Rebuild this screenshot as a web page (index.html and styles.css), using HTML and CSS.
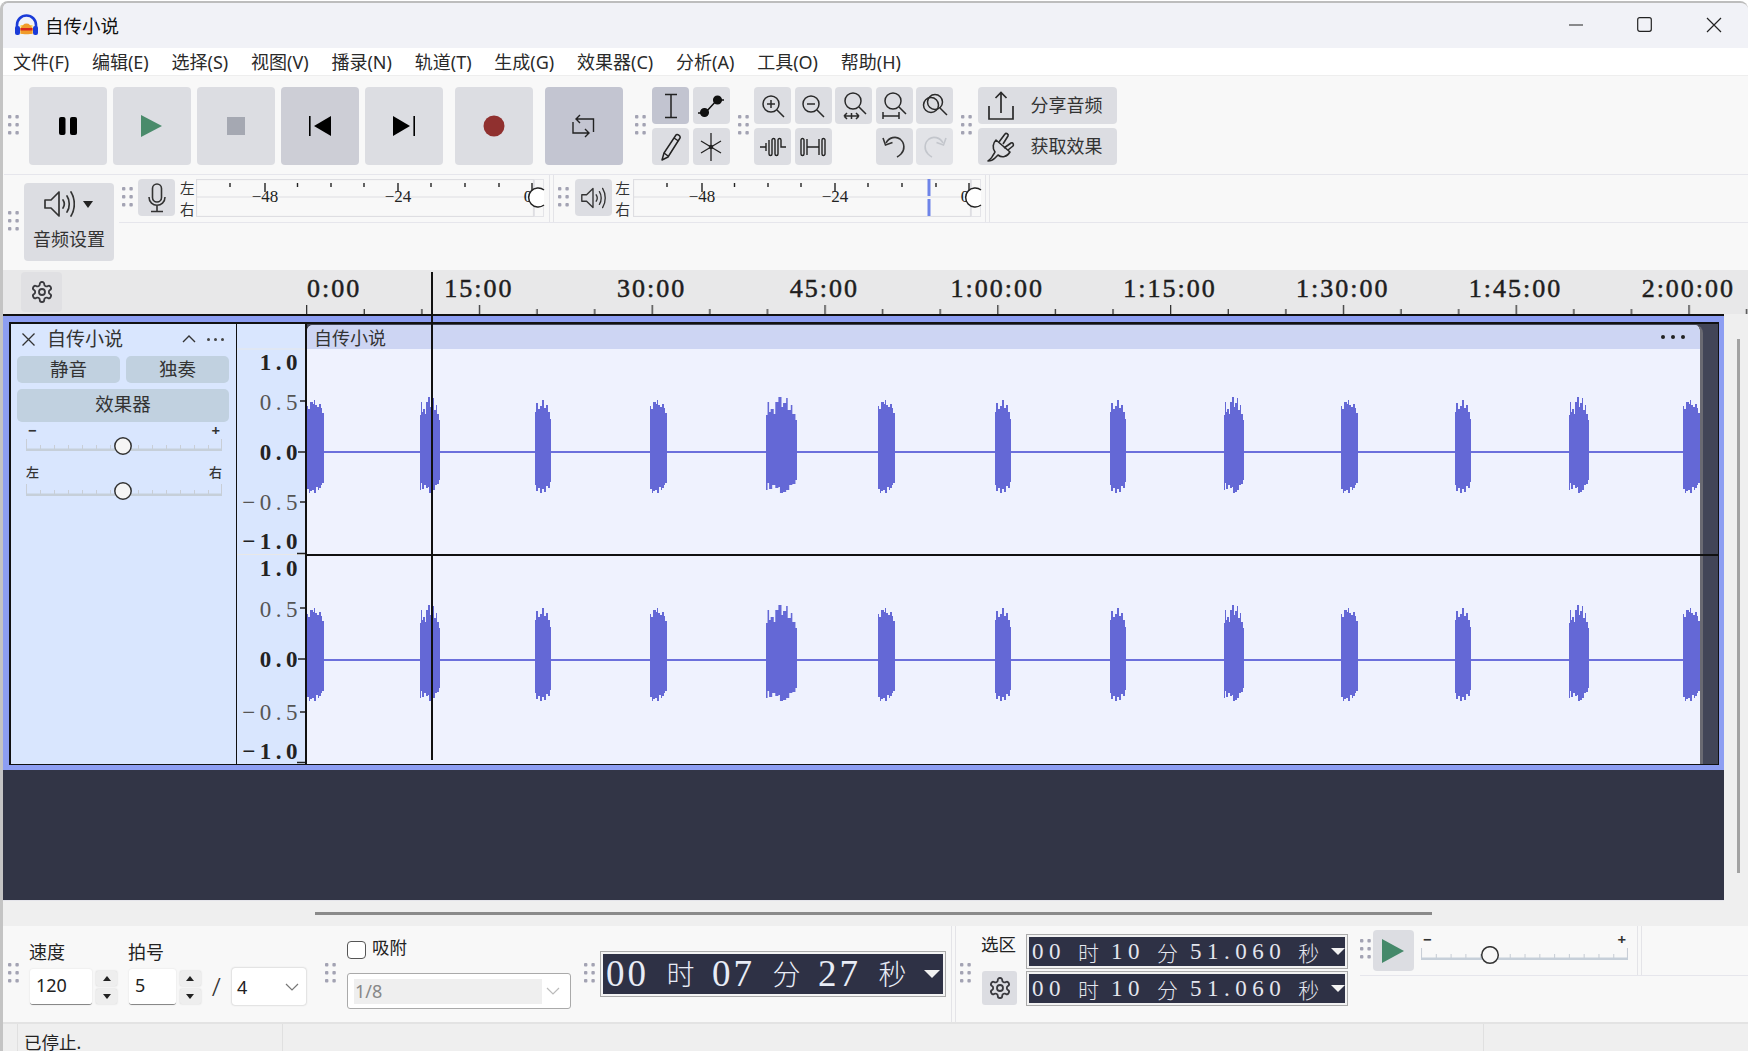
FILE: index.html
```html
<!DOCTYPE html>
<html lang="zh-CN">
<head>
<meta charset="utf-8">
<title>自传小说</title>
<link rel="stylesheet" href="styles.css">
</head>
<body>
<svg class="defs" width="0" height="0" aria-hidden="true">
  <defs>
    <symbol id="grip" viewBox="0 0 11 20"><g fill="#a3a3b3"><rect x="0" y="0" width="3.4" height="3.4" rx="1"/><rect x="7.4" y="0" width="3.4" height="3.4" rx="1"/><rect x="0" y="8" width="3.4" height="3.4" rx="1"/><rect x="7.4" y="8" width="3.4" height="3.4" rx="1"/><rect x="0" y="16" width="3.4" height="3.4" rx="1"/><rect x="7.4" y="16" width="3.4" height="3.4" rx="1"/></g></symbol>
    <symbol id="gear" viewBox="0 0 24 24"><g fill="none" stroke="#3a3a3f" stroke-width="1.8"><path d="M12.22 2h-.44a2 2 0 0 0-2 2v.18a2 2 0 0 1-1 1.73l-.43.25a2 2 0 0 1-2 0l-.15-.08a2 2 0 0 0-2.73.73l-.22.38a2 2 0 0 0 .73 2.73l.15.1a2 2 0 0 1 1 1.72v.51a2 2 0 0 1-1 1.74l-.15.09a2 2 0 0 0-.73 2.73l.22.38a2 2 0 0 0 2.73.73l.15-.08a2 2 0 0 1 2 0l.43.25a2 2 0 0 1 1 1.73V20a2 2 0 0 0 2 2h.44a2 2 0 0 0 2-2v-.18a2 2 0 0 1 1-1.73l.43-.25a2 2 0 0 1 2 0l.15.08a2 2 0 0 0 2.73-.73l.22-.39a2 2 0 0 0-.73-2.73l-.15-.08a2 2 0 0 1-1-1.74v-.5a2 2 0 0 1 1-1.74l.15-.09a2 2 0 0 0 .73-2.73l-.22-.38a2 2 0 0 0-2.73-.73l-.15.08a2 2 0 0 1-2 0l-.43-.25a2 2 0 0 1-1-1.73V4a2 2 0 0 0-2-2z"/><circle cx="12" cy="12" r="3"/></g></symbol>
    <symbol id="speaker" viewBox="0 0 32 30"><g fill="none" stroke="#333" stroke-width="1.7" stroke-linejoin="round" stroke-linecap="round"><path d="M2 11h6l8-8v24l-8-8H2z"/><path d="M20 11c1.6 2.4 1.6 5.6 0 8"/><path d="M24 7c3 4.4 3 11.6 0 16"/><path d="M28 3c4.4 7 4.4 17 0 24"/></g></symbol>
    <symbol id="mtr" viewBox="0 0 350 38">
      <rect x="338.5" y=".5" width="9" height="37" fill="none" stroke="#e4e4e8"/>
      <rect x=".5" y=".5" width="337" height="37" fill="#f8f8f8" stroke="#dedee2" stroke-width="1.2"/>
      <path d="M.5 18h337" stroke="#dedee2" stroke-width="1.2"/>
      <path d="M34 4v4M101.500 4v4M135 4v4M168 4v4M235 4v4M269 4v4M303 4v4M69 4v9M202 4v9M336 4v9" stroke="#222" stroke-width="1.4" fill="none"/>
      <g class="mtr-text"><text x="69" y="22.500" text-anchor="middle">−48</text><text x="202" y="22.500" text-anchor="middle">−24</text><text x="332" y="22.500" text-anchor="middle">0</text></g>
      <path d="M348 11a9.500 9.500 0 1 0 0 15" fill="#fff" stroke="#222" stroke-width="1.500"/>
    </symbol>
    <symbol id="ticks" viewBox="0 0 196 12" preserveAspectRatio="none">
      <path d="M.5 0v10M14.500 6v4M28.500 6v4M42.500 6v4M56.500 6v4M70.500 6v4M84.500 6v4M98.500 6v4M112.500 6v4M126.500 6v4M140.500 6v4M154.500 6v4M168.500 6v4M182.500 6v4M195.500 0v10" stroke="#c9ced6" fill="none"/>
      <rect x="0" y="9.500" width="196" height="2.500" fill="#c6cfd9"/>
    </symbol>
    <path id="b1" d="M0-46H1V-43H3V-50H6V-48H7V-52H8V-47H10V-45H12V-48H14V-44H15V-39H17V31H15V33H14V36H12V38H11V35H9V41H7V38H5V39H3V41H2V37H0Z"/>
    <path id="b2" d="M0-37H1V-50H2V-40H3V-43H5V-38H6V-50H8V-55H10V-45H11V-49H13V-54H14V-42H16V-47H17V-38H19V-32H20V28H19V32H17V33H15V38H13V40H11V41H9V35H8V36H6V33H4V37H2V31H1V38H0Z"/>
    <path id="b3" d="M0-40H1V-49H3V-43H5V-46H7V-52H9V-44H11V-47H13V-40H15V-33H16V30H15V36H13V34H11V40H9V37H7V41H5V36H3V39H1V33H0Z"/>
    <g id="wave" fill="#6468d6">
      <rect x="0" y="-1" width="1396" height="2" fill="#6c70dc"/>
      <use href="#b1" x="0"/>
      <use href="#b2" x="113"/>
      <use href="#b3" x="228"/>
      <use href="#b1" x="343"/>
      <use href="#b2" transform="translate(459 0) scale(1.55 1)"/>
      <use href="#b1" x="571"/>
      <use href="#b3" x="688"/>
      <use href="#b3" x="803"/>
      <use href="#b2" x="917"/>
      <use href="#b1" x="1034"/>
      <use href="#b3" x="1148"/>
      <use href="#b2" x="1262"/>
      <use href="#b1" x="1376"/>
    </g>
  </defs>
</svg>

<div class="window">
  <header class="titlebar">
    <svg class="logo" width="25" height="22" viewBox="0 0 25 22">
      <path d="M6.500 11h12v9h-12z" fill="#f8d25a"/>
      <path d="M6.500 14.500c2-3 3-5 6-5s4 2 6 5v5c-2 1-10 1-12 0z" fill="#f09a2a"/>
      <path d="M6.500 14h12v2.500h-12z" fill="#d8261c"/>
      <path d="M3 15V11a9.500 9.500 0 0 1 19 0v4" fill="none" stroke="#1a3bd8" stroke-width="2.600"/>
      <rect x="1" y="12" width="5" height="9" rx="2" fill="#1a3bd8"/><rect x="19" y="12" width="5" height="9" rx="2" fill="#1a3bd8"/>
    </svg>
    <span class="title-text">自传小说</span>
    <div class="win-controls">
      <svg width="14" height="2" viewBox="0 0 14 2"><path d="M0 1h14" stroke="#222" stroke-width="1.200"/></svg>
      <svg width="15" height="15" viewBox="0 0 15 15"><rect x=".7" y=".7" width="13.600" height="13.600" rx="2" fill="none" stroke="#222" stroke-width="1.200"/></svg>
      <svg width="16" height="16" viewBox="0 0 16 16"><path d="M1 1l14 14M15 1L1 15" stroke="#222" stroke-width="1.200"/></svg>
    </div>
  </header>

  <nav class="menubar">
    <span>文件(F)</span><span>编辑(E)</span><span>选择(S)</span><span>视图(V)</span><span>播录(N)</span><span>轨道(T)</span><span>生成(G)</span><span>效果器(C)</span><span>分析(A)</span><span>工具(O)</span><span>帮助(H)</span>
  </nav>

  <section class="toolbars">
    <div class="tool-row">
      <svg class="grip grip-top"><use href="#grip"/></svg>
      <div class="transport">
        <div class="tbtn"><svg width="18" height="18" viewBox="0 0 18 18"><rect width="6.500" height="18" rx="2"/><rect x="11" width="7" height="18" rx="2"/></svg></div>
        <div class="tbtn"><svg width="21" height="22" viewBox="0 0 21 22"><path d="M0 0l21 11L0 22z" fill="#4a8b6b"/></svg></div>
        <div class="tbtn"><svg width="18" height="18" viewBox="0 0 18 18"><rect width="18" height="18" fill="#a5a8b2"/></svg></div>
        <div class="tbtn tbtn-dim"><svg width="22" height="20" viewBox="0 0 22 20"><rect width="1.600" height="20"/><path d="M22 0v20L5 10z"/></svg></div>
        <div class="tbtn"><svg width="22" height="20" viewBox="0 0 22 20"><rect x="20.400" width="1.600" height="20"/><path d="M0 0v20l17-10z"/></svg></div>
        <div class="tbtn tbtn-rec"><svg width="22" height="22" viewBox="0 0 22 22"><circle cx="11" cy="11" r="10.500" fill="#90302f"/></svg></div>
        <div class="tbtn tbtn-loop"><svg width="23" height="24" viewBox="0 0 23 24" fill="none" stroke="#222" stroke-width="1.400"><path d="M8 1L4 5l4 4M4 5h17.500v13"/><path d="M1 8v11h16M13 15l4 4-4 4"/></svg></div>
      </div>
      <svg class="grip grip-a"><use href="#grip"/></svg>
      <div class="tool-grid">
        <div class="sbtn sbtn-on"><svg width="16" height="26" viewBox="0 0 16 26" fill="none" stroke="#222" stroke-width="1.500"><path d="M2 1.500h12M2 24.500h12M8 1.500v23"/></svg></div>
        <div class="sbtn"><svg width="28" height="24" viewBox="0 0 28 24" fill="none" stroke="#111" stroke-width="1.500"><path d="M9 18L20 6M1 19h3M20 6h7"/><circle cx="7.500" cy="18.500" r="3.800" fill="#111"/><circle cx="20.500" cy="6" r="3.800" fill="#111"/></svg></div>
        <div class="sbtn"><svg width="25" height="29" viewBox="0 0 25 29" fill="none" stroke="#222" stroke-width="1.500" stroke-linejoin="round"><path d="M6 21L18 3c1-1.500 5 1 4 3L10 25l-6 3z"/><path d="M16 6l4.500 3M6 21l4 3"/></svg></div>
        <div class="sbtn"><svg width="24" height="28" viewBox="0 0 24 28" fill="none" stroke="#222" stroke-width="1.300"><path d="M12 0v28M2 8l20 12M22 8L2 20"/><circle cx="12" cy="14" r="1.600" fill="#222"/></svg></div>
      </div>
      <svg class="grip grip-b"><use href="#grip"/></svg>
      <div class="zoom-grid">
        <div class="sbtn"><svg width="24" height="24" viewBox="0 0 24 24" fill="none" stroke="#2a2a2a" stroke-width="1.500"><circle cx="10" cy="10" r="8"/><path d="M16 16l7 7M6 10h8M10 6v8"/></svg></div>
        <div class="sbtn"><svg width="24" height="24" viewBox="0 0 24 24" fill="none" stroke="#2a2a2a" stroke-width="1.500"><circle cx="10" cy="10" r="8"/><path d="M16 16l7 7M6 10h8"/></svg></div>
        <div class="sbtn"><svg width="26" height="28" viewBox="0 0 26 28" fill="none" stroke="#2a2a2a" stroke-width="1.500"><circle cx="12" cy="9" r="8"/><path d="M18 15l7 7M3 24h15M3 24l3-3M3 24l3 3M18 24l-3-3M18 24l-3 3M10.500 21v6"/></svg></div>
        <div class="sbtn"><svg width="26" height="28" viewBox="0 0 26 28" fill="none" stroke="#2a2a2a" stroke-width="1.500"><circle cx="12" cy="9" r="8"/><path d="M18 15l7 7M2 24h16M2 20v7M18 20v7"/></svg></div>
        <div class="sbtn"><svg width="26" height="26" viewBox="0 0 26 26" fill="none" stroke="#2a2a2a" stroke-width="1.500"><circle cx="9" cy="12" r="7.500"/><circle cx="13" cy="9" r="7.500"/><path d="M18 15l7 7"/></svg></div>
        <div class="sbtn"><svg width="26" height="20" viewBox="0 0 26 20" fill="none" stroke="#222" stroke-width="1.400"><path d="M0 10h6M6 6v8M9 3v14a1.500 1.500 0 0 0 3 0V3a1.500 1.500 0 0 1 3 0v14a1.500 1.500 0 0 0 3 0V3a1.500 1.500 0 0 1 3 0v7h5"/></svg></div>
        <div class="sbtn"><svg width="26" height="20" viewBox="0 0 26 20" fill="none" stroke="#222" stroke-width="1.400"><path d="M1 3v14a1.500 1.500 0 0 0 3 0V3a1.500 1.500 0 0 0-3 0zM7 2v16M7 10h12M19 2v16M22 3v14a1.500 1.500 0 0 0 3 0V3a1.500 1.500 0 0 0-3 0z"/></svg></div>
        <div class="sbtn-gap"></div>
        <div class="sbtn"><svg width="24" height="26" viewBox="0 0 24 26" fill="none" stroke="#333" stroke-width="1.600"><path d="M4 9c3-6 10-7 14-4 5 4 5 11 1 15-1 1-2 2-4 3"/><path d="M1 4l2.500 7 7-2.500"/></svg></div>
        <div class="sbtn sbtn-off"><svg width="24" height="26" viewBox="0 0 24 26" fill="none" stroke="#c3c6cc" stroke-width="1.600"><path d="M20 9c-3-6-10-7-14-4-5 4-5 11-1 15 1 1 2 2 4 3"/><path d="M23 4l-2.500 7-7-2.500"/></svg></div>
      </div>
      <svg class="grip grip-c"><use href="#grip"/></svg>
      <div class="share-col">
        <div class="wide-btn"><svg width="28" height="32" viewBox="0 0 28 32" fill="none" stroke="#2a2a2a" stroke-width="1.700"><path d="M2 16v13h24V16M14 23V3M8.500 8L14 2.500 19.500 8"/></svg><span>分享音频</span></div>
        <div class="wide-btn"><svg width="28" height="32" viewBox="0 0 28 32" fill="none" stroke="#2a2a2a" stroke-width="1.600" stroke-linejoin="round"><path d="M9 9l14 12c-3 5-8 6-12 3l-3 3c-2 2-4 3-7 3 1-1 3-2 4-4 1-2 2-3 3-5-3-4-2-9 1-12z"/><path d="M12 11l6-8c1-1.500 4 0 3 2l-5 8M17 17l7-5c2-1 3 1.500 2 3l-5 4"/></svg><span>获取效果</span></div>
      </div>
    </div>

    <div class="audio-row">
      <svg class="grip grip-audio"><use href="#grip"/></svg>
      <div class="audio-setup">
        <div class="audio-icons"><svg width="32" height="30"><use href="#speaker"/></svg><i class="caret-down"></i></div>
        <span>音频设置</span>
      </div>
      <div class="meter-area">
        <div class="meter-row">
          <svg class="grip grip-m1"><use href="#grip"/></svg>
          <div class="mbtn"><svg width="18" height="30" viewBox="0 0 18 30" fill="none" stroke="#333" stroke-width="1.600"><rect x="4.500" y="1" width="9" height="18" rx="4.500"/><path d="M1 14c0 11 16 11 16 0M9 22v6M3 28.500h12"/></svg></div>
          <div class="lr"><span>左</span><span>右</span></div>
          <svg class="meter" width="350" height="38"><use href="#mtr"/></svg>
          <div class="dbl-sep dbl-sep-a"></div>
          <svg class="grip grip-m2"><use href="#grip"/></svg>
          <div class="mbtn mbtn-b"><svg width="26" height="24"><use href="#speaker"/></svg></div>
          <div class="lr lr-b"><span>左</span><span>右</span></div>
          <svg class="meter meter-b" width="350" height="38"><use href="#mtr"/><path d="M294.500 0h3v17h-3zM294.500 20h3v17h-3z" fill="#6e84e8"/></svg>
          <div class="dbl-sep dbl-sep-b"></div>
        </div>
      </div>
    </div>
  </section>

  <div class="stage">
    <div class="ruler">
      <div class="ruler-gear"><svg width="24" height="24"><use href="#gear"/></svg></div>
      <div class="ruler-labels">
        <span class="r-first">0:00</span><span>15:00</span><span>30:00</span><span>45:00</span><span>1:00:00</span><span>1:15:00</span><span>1:30:00</span><span>1:45:00</span><span>2:00:00</span>
      </div>
      <svg class="ruler-ticks" width="1745" height="9">
        <defs><pattern id="rt" x="303" y="0" width="172.800" height="9" patternUnits="userSpaceOnUse"><rect x="0" y="0" width="1.300" height="9" fill="#333"/><rect x="57.600" y="4" width="1.300" height="5" fill="#333"/><rect x="115.200" y="4" width="1.300" height="5" fill="#333"/></pattern></defs>
        <rect x="300" width="1445" height="9" fill="url(#rt)"/>
      </svg>
    </div>
    <div class="work">
      <main class="tracks">
        <div class="focus-frame">
          <div class="track-row">
            <aside class="track-panel">
              <div class="tp-head">
                <svg class="tp-close" width="13" height="13" viewBox="0 0 13 13"><path d="M.5.5l12 12M12.500.5l-12 12" stroke="#333" stroke-width="1.300"/></svg>
                <span class="tp-name">自传小说</span>
                <svg class="tp-up" width="14" height="8" viewBox="0 0 14 8"><path d="M1 7l6-6 6 6" fill="none" stroke="#333" stroke-width="1.400"/></svg>
                <span class="tp-dots"><i></i><i></i><i></i></span>
              </div>
              <div class="tp-btns"><div class="tp-btn">静音</div><div class="tp-btn">独奏</div><div class="tp-btn tp-btn-wide">效果器</div></div>
              <div class="tp-slider tp-slider-gain">
                <div class="sl-labels"><span>−</span><span>+</span></div>
                <svg width="196" height="22" viewBox="0 0 196 22"><use href="#ticks" width="196" height="12" y="2"/><circle cx="97" cy="9" r="8.200" fill="#f5f5f5" stroke="#333" stroke-width="1.500"/></svg>
              </div>
              <div class="tp-slider tp-slider-pan">
                <div class="sl-labels sl-labels-cjk"><span>左</span><span>右</span></div>
                <svg width="196" height="22" viewBox="0 0 196 22"><use href="#ticks" width="196" height="12" y="2"/><circle cx="97" cy="9" r="8.200" fill="#f5f5f5" stroke="#333" stroke-width="1.500"/></svg>
              </div>
            </aside>
            <svg class="vruler" width="68" height="440" viewBox="0 0 68 440">
              <path d="M0 25h68M0 230.500h68" stroke="#e8e8e8" stroke-width="1.200"/>
              <path d="M63 77h5M61 128h7M63 178h5M60 229.500h8M63 284h5M61 335h7M63 388h5M60 438.500h8" stroke="#222" stroke-width="1.300"/>
              <g class="v-bold"><text x="65" y="46">1.0</text><text x="65" y="135.500">0.0</text><text x="65" y="225">−1.0</text><text x="65" y="251.500">1.0</text><text x="65" y="342.500">0.0</text><text x="65" y="434.500">−1.0</text></g>
              <g class="v-thin"><text x="65" y="85.500">0.5</text><text x="65" y="185.500">−0.5</text><text x="65" y="292.500">0.5</text><text x="65" y="396">−0.5</text></g>
            </svg>
            <div class="clip-wrap">
              <div class="clip">
                <div class="clip-head"><span>自传小说</span><span class="clip-dots"><i></i><i></i><i></i></span></div>
                <svg class="ch ch-1" width="1393" height="205"><use href="#wave" y="103"/></svg>
                <svg class="ch ch-2" width="1393" height="209"><use href="#wave" y="104"/></svg>
              </div>
            </div>
          </div>
        </div>
      </main>
      <div class="vscroll"><div class="vthumb"></div></div>
    </div>
    <div class="cursor-line"></div>
  </div>

  <div class="hscroll"><div class="hthumb"></div></div>

  <section class="bottom-bar">
    <svg class="grip grip-b1"><use href="#grip"/></svg>
    <div class="field f-tempo">
      <label>速度</label>
      <div class="field-row"><div class="numbox nb-tempo">120</div><div class="spin"><b><i class="tri-up"></i></b><b><i class="tri-down"></i></b></div></div>
    </div>
    <div class="field f-beats">
      <label>拍号</label>
      <div class="field-row"><div class="numbox nb-beats">5</div><div class="spin"><b><i class="tri-up"></i></b><b><i class="tri-down"></i></b></div></div>
    </div>
    <span class="slash">/</span>
    <div class="dropdown dd-beat"><span>4</span><svg width="14" height="8" viewBox="0 0 14 8"><path d="M1 1l6 6 6-6" fill="none" stroke="#777" stroke-width="1.200"/></svg></div>
    <svg class="grip grip-b2"><use href="#grip"/></svg>
    <div class="snap">
      <div class="snap-head"><span class="checkbox"></span><span class="snap-text">吸附</span></div>
      <div class="snap-select"><span>1/8</span><svg width="14" height="8" viewBox="0 0 14 8"><path d="M1 1l6 6 6-6" fill="none" stroke="#bbb" stroke-width="1.200"/></svg></div>
    </div>
    <svg class="grip grip-b3"><use href="#grip"/></svg>
    <div class="clock">
      <span class="c-n">00</span><span class="c-u">时</span><span class="c-n">07</span><span class="c-u">分</span><span class="c-n">27</span><span class="c-u">秒</span><i class="tri-white"></i>
    </div>
    <div class="dbl-sep dbl-sep-c"></div>
    <svg class="grip grip-b4"><use href="#grip"/></svg>
    <div class="sel-label">
      <span>选区</span>
      <div class="sel-gear"><svg width="24" height="24"><use href="#gear"/></svg></div>
    </div>
    <div class="sel-boxes">
      <div class="sclock"><span>00</span><span>时</span><span>10</span><span>分</span><span>51.060</span><span>秒</span><i class="tri-white tri-small"></i></div>
      <div class="sclock"><span>00</span><span>时</span><span>10</span><span>分</span><span>51.060</span><span>秒</span><i class="tri-white tri-small"></i></div>
    </div>
    <div class="play-speed">
      <svg class="grip grip-b5"><use href="#grip"/></svg>
      <div class="ps-btn"><svg width="22" height="24" viewBox="0 0 22 24"><path d="M0 0l22 12L0 24z" fill="#45896a"/></svg></div>
      <div class="ps-slider">
        <div class="sl-labels"><span>−</span><span>+</span></div>
        <svg width="207" height="22" viewBox="0 0 207 22"><use href="#ticks" width="207" height="12" y="2"/><circle cx="69" cy="9" r="8.300" fill="#f7f7f7" stroke="#333" stroke-width="1.500"/></svg>
      </div>
      <div class="dbl-sep dbl-sep-d"></div>
    </div>
  </section>

  <footer class="statusbar">
    <div class="st st-a">已停止.</div>
    <div class="st st-b"></div>
    <div class="st st-c"></div>
  </footer>
</div>
</body>
</html>
```
FILE: styles.css
```css
* { box-sizing: border-box; }
html, body { margin: 0; padding: 0; background: #fff; }
body { width: 1748px; height: 1051px; overflow: hidden; font-family: "Noto Sans", "Noto Sans CJK SC", sans-serif; color: #222; }
.defs { position: absolute; }
svg { display: block; flex: none; }
i { font-style: normal; display: block; }

.window { margin-top: 1px; height: 1050px; overflow: hidden; border-top: 2px solid #bdbdbd; border-left: 3px solid #c4c4c4; border-top-left-radius: 8px; border-top-right-radius: 8px; background: #efefef; }

.titlebar { height: 45px; background: #f1f2f7; display: flex; align-items: center; padding: 0 0 2px 11px; }
.logo { margin-top: 1px; }
.title-text { margin-left: 6px; font-size: 18.5px; color: #111; }
.win-controls { margin-left: auto; display: flex; align-items: center; padding-right: 26px; gap: 54px; }

.menubar { height: 27px; background: #fff; display: flex; align-items: center; padding: 0 0 2px 10px; gap: 22.8px; font-size: 18px; color: #2a2a2a; }

.toolbars { height: 195px; background: #f8f8f8; border-top: 1px solid #eee; }
.tool-row { height: 99px; padding-top: 11px; display: flex; align-items: flex-start; border-bottom: 1px solid #e6e6ec; margin-left: 1px; }
.grip { width: 11px; height: 20px; }
.grip-top { margin: 28px 0 0 4px; }
.transport { display: flex; margin-left: 9.5px; gap: 6px; }
.tbtn { width: 78px; height: 78px; background: #dcdde2; border-radius: 4px; display: flex; align-items: center; justify-content: center; }
.tbtn-dim { background: #cdced6; }
.tbtn-rec { margin-left: 6px; }
.tbtn-loop { margin-left: 6px; background: #c3c5d1; }
.grip-a { margin: 28px 0 0 12.5px; }
.tool-grid { margin-left: 6px; display: grid; grid-template-columns: 37px 37px; grid-auto-rows: 37px; gap: 4px 3.5px; }
.sbtn { background: #dcdde2; border-radius: 4px; display: flex; align-items: center; justify-content: center; }
.sbtn-on { background: #c2c4d0; }
.sbtn-off { background: #e2e3e7; }
.grip-b { margin: 28px 0 0 8px; }
.zoom-grid { margin-left: 5.5px; display: grid; grid-template-columns: repeat(5, 37px); grid-auto-rows: 37px; gap: 4px 3.5px; }
.grip-c { margin: 28px 0 0 7.5px; }
.share-col { margin-left: 6px; display: flex; flex-direction: column; gap: 4px; }
.wide-btn { width: 139.5px; height: 37px; background: #dcdde2; border-radius: 4px; display: flex; align-items: center; padding: 0 0 0 9px; gap: 16px; font-size: 18px; color: #333; }
.wide-btn span { margin-top: -4px; }

.audio-row { display: flex; align-items: flex-start; height: 95px; padding-left: 5px; }
.grip-audio { margin-top: 36px; }
.audio-setup { margin: 8px 0 0 5px; width: 90px; height: 78px; background: #dcdde2; border-radius: 4px; display: flex; flex-direction: column; align-items: center; font-size: 18px; color: #333; padding: 4px 2px 0 0; }
.audio-icons { display: flex; align-items: center; gap: 8px; height: 34px; }
.audio-setup > span { margin: 4px 0 0 2px; }
.caret-down { width: 0; height: 0; border: 5px solid transparent; border-top: 7px solid #222; border-bottom: 0; }
.meter-area { flex: 1; margin-left: 5px; }
.meter-row { height: 48px; border-bottom: 1.5px solid #e6e6ec; display: flex; align-items: flex-start; }
.grip-m1 { margin: 12px 0 0 3px; }
.grip-m2 { margin: 12px 0 0 4px; }
.mbtn { margin: 4px 0 0 5px; width: 37px; height: 37px; background: #dcdde2; border-radius: 4px; display: flex; align-items: center; justify-content: center; }
.mbtn-b { margin-left: 5.5px; }
.lr { margin: 4px 0 0 5px; width: 14px; display: flex; flex-direction: column; gap: 3px; font-size: 14.5px; line-height: 18px; color: #333; }
.lr-b { margin-left: 4px; }
.meter { margin: 4px 0 0 2px; overflow: visible; }
.meter-b { margin-left: 3px; }
.mtr-text text { font-family: "Liberation Serif", "Noto Sans", serif; font-size: 17px; fill: #222; }
.dbl-sep { width: 5px; flex: none; border-left: 1.5px solid #e4e4e8; border-right: 1.5px solid #e4e4e8; align-self: stretch; }
.dbl-sep-a { margin-left: 3px; }
.dbl-sep-b { margin-left: 2px; }

.stage { position: relative; }
.ruler { height: 44px; background: #e8e8e9; display: flex; position: relative; overflow: hidden; }
.ruler-gear { margin: 2px 0 0 18px; width: 41px; height: 40px; background: #e0e0e3; border-radius: 4px; display: flex; align-items: center; justify-content: center; flex: none; }
.ruler-labels { margin-left: 244px; display: flex; flex: none; font-family: "Liberation Serif", serif; font-size: 26px; letter-spacing: 2px; color: #1e1e1e; -webkit-text-stroke: .5px #1e1e1e; line-height: 38px; }
.ruler-labels span { width: 172.8px; text-align: center; flex: none; }
.ruler-labels .r-first { width: 86.4px; text-align: left; padding-left: 1px; }
.ruler-ticks { position: absolute; left: 0; bottom: 0; }

.work { display: flex; height: 587px; }
.tracks { width: 1721px; background: #323546; border-top: 2px solid #111; border-bottom: 1px solid #e4e4ea; flex: none; }
.focus-frame { height: 454px; border: solid #8d9ef2; border-width: 6px 5px 5px 6px; }
.track-row { height: 443px; border: solid #111; border-width: 2px 1px 1px 2px; display: flex; }
.track-panel { width: 226px; background: #d9e6fe; border-right: 1px solid #111; flex: none; padding: 0 6px; }
.tp-head { height: 32px; display: flex; align-items: center; padding: 0 0 2px 5px; }
.tp-name { margin-left: 12px; font-size: 19px; color: #333; line-height: 20px; }
.tp-up { margin-left: 59px; }
.tp-dots { margin-left: 11px; display: flex; gap: 4px; }
.tp-dots i { width: 3px; height: 3px; border-radius: 50%; background: #444; }
.tp-btns { display: grid; grid-template-columns: 103px 103px; column-gap: 6px; row-gap: 6px; grid-auto-rows: 27px; }
.tp-btn { background: #c1d1e0; border-radius: 5px; display: flex; align-items: center; justify-content: center; font-size: 18.5px; color: #333; padding-bottom: 4px; }
.tp-btn-wide { grid-column: 1 / 3; height: 33px; padding-bottom: 6px; }
.tp-slider { width: 196px; margin-left: 9px; }
.tp-slider-gain { margin-top: 6.5px; }
.tp-slider-pan { margin-top: 6px; }
.sl-labels { display: flex; justify-content: space-between; height: 14px; line-height: 14px; font-size: 15px; font-weight: 700; color: #333; padding: 0 2px; }
.sl-labels-cjk { height: 17px; font-size: 13px; font-weight: 500; padding: 0; }

.vruler { background: #d9e6fe; }
.v-bold text, .v-thin text { font-family: "Liberation Serif", serif; font-size: 23px; letter-spacing: 4.5px; text-anchor: end; }
.v-bold text { font-weight: 700; fill: #222; }
.v-thin text { fill: #555; }
.clip-wrap { flex: 1; background: #424557; border-left: 2px solid #111; padding-top: 1px; position: relative; }
.clip-wrap::after { content: ""; position: absolute; left: 0; right: 0; top: 230px; height: 1.5px; background: #111; }
.clip { width: 1396px; height: 439px; background: #eff2fe; border-right: 3px solid #6a6a72; border-top-left-radius: 6px; border-top-right-radius: 8px; overflow: hidden; }
.clip-head { height: 24px; background: #cdd5f3; display: flex; align-items: center; justify-content: space-between; padding: 0 15px 0 7px; font-size: 18px; color: #333; }
.clip-dots { display: flex; gap: 6px; }
.clip-dots i { width: 4px; height: 4px; border-radius: 50%; background: #222; }
.ch-2 { margin-top: 1.5px; }

.cursor-line { position: absolute; left: 428px; top: 2px; width: 1.5px; height: 488px; background: #111; }

.vscroll { flex: 1; background: #efefef; padding: 25px 0 0 13px; }
.vthumb { width: 3px; height: 534px; background: #a2a2a2; }
.hscroll { height: 25px; background: #efefef; padding: 11px 0 0 312px; }
.hthumb { width: 1117px; height: 3px; background: #8a8a8a; }

.bottom-bar { height: 98px; background: #f8f8f8; border-bottom: 2px solid #e3e3e3; display: flex; align-items: flex-start; }
.grip-b1 { margin: 37px 0 0 5px; }
.field { margin-top: 16px; }
.field label { display: block; height: 20px; line-height: 20px; font-size: 18px; color: #222; margin-left: -1px; }
.field-row { margin-top: 7px; display: flex; gap: 4px; }
.f-tempo { margin-left: 11px; }
.f-beats { margin-left: 12px; }
.numbox { height: 36px; background: #fff; border-bottom: 1.5px solid #888; border-radius: 3px; font-size: 18px; line-height: 33px; padding-left: 6px; color: #222; box-shadow: 0 0 2px #ddd; }
.nb-tempo { width: 62px; }
.nb-beats { width: 46.5px; }
.spin { width: 21px; display: flex; flex-direction: column; gap: 3px; padding-top: 2px; }
.spin b { height: 15px; background: #eeeeee; border-radius: 2px; box-shadow: 0 0 2px #ccc; display: flex; align-items: center; justify-content: center; }
.tri-up { width: 0; height: 0; border: 4.5px solid transparent; border-bottom: 5.5px solid #222; border-top: 0; }
.tri-down { width: 0; height: 0; border: 4.5px solid transparent; border-top: 5.5px solid #222; border-bottom: 0; }
.slash { width: 31.5px; text-align: center; margin-top: 43px; font-size: 26px; line-height: 34px; font-weight: 300; color: #333; flex: none; }
.dropdown { margin-top: 42px; height: 37px; background: #fff; border-radius: 3px; box-shadow: 0 0 2px #aaa; display: flex; align-items: center; justify-content: space-between; font-size: 18px; padding: 0 7px 0 5px; }
.dd-beat { width: 73.5px; }
.grip-b2 { margin: 37px 0 0 19.5px; }
.snap { margin: 15px 0 0 11px; width: 224px; }
.snap-head { height: 18px; display: flex; align-items: center; gap: 6px; font-size: 17.5px; color: #222; }
.snap-text { margin-top: -8px; }
.checkbox { width: 19px; height: 18px; background: #fff; border: 1.5px solid #555; border-radius: 4px; }
.snap-select { margin-top: 14px; height: 36px; background: #fff; border: 1.5px solid #aaa; border-radius: 3px; padding: 4px 10px 4px 6px; display: flex; align-items: center; justify-content: space-between; font-size: 18px; color: #888; }
.snap-select span { width: 188px; height: 25px; background: #efefef; line-height: 25px; padding-left: 1px; }
.grip-b3 { margin: 37px 0 0 12.5px; }
.clock { margin: 26px 0 0 6.5px; width: 344px; height: 44px; background: #2e3145; border: 2px solid #f4f4f4; outline: 1px solid #aaa; display: flex; align-items: center; padding-left: 3px; gap: 17.5px; color: #e8ecf6; flex: none; }
.c-n { font-family: "Liberation Serif", serif; font-size: 37px; letter-spacing: 3px; line-height: 42px; }
.c-u { font-size: 28px; line-height: 40px; font-weight: 300; }
.tri-white { width: 0; height: 0; border: 8px solid transparent; border-top: 8px solid #f2f2f2; border-bottom: 0; margin: 0 3px 0 auto; flex: none; }
.dbl-sep-c { margin-left: 6px; }
.grip-b4 { margin: 37px 0 0 4px; }
.sel-label { margin: 8px 0 0 10px; width: 36px; font-size: 17.5px; line-height: 20px; color: #222; }
.sel-label span { display: block; white-space: nowrap; }
.sel-gear { margin: 17px 0 0 1px; width: 35px; height: 34px; background: #dcdde2; border-radius: 3px; display: flex; align-items: center; justify-content: center; }
.sel-boxes { margin: 9px 0 0 10px; width: 320px; display: flex; flex-direction: column; gap: 4px; }
.sclock { height: 33px; background: #2e3145; border: 2px solid #f2f2f2; outline: 1px solid #aaa; display: flex; align-items: center; padding-left: 3px; gap: 12px; color: #e4e6ee; font-family: "Liberation Serif", "Noto Sans CJK SC", serif; font-size: 23px; letter-spacing: 5.5px; line-height: 28px; }
.sclock span:nth-child(even) { font-family: "Noto Sans CJK SC", sans-serif; font-size: 21px; font-weight: 300; letter-spacing: 0; }
.tri-small { border-width: 7.5px; border-top-width: 7px; border-bottom-width: 0; margin: 0 5px 0 auto; }
.play-speed { flex: 1; margin-left: 13px; height: 50px; border-bottom: 1.5px solid #e6e6ec; display: flex; align-items: flex-start; }
.grip-b5 { margin-top: 13px; }
.ps-btn { margin: 4px 0 0 2px; width: 40.5px; height: 41px; background: #dcdde2; border-radius: 4px; display: flex; align-items: center; justify-content: center; }
.ps-slider { margin: 6px 0 0 7.5px; width: 207px; }
.dbl-sep-d { margin-left: 9px; }

.statusbar { height: 27px; display: flex; background: #efefef; font-size: 17.5px; color: #222; }
.st { height: 27px; line-height: 36px; border-left: 1.5px solid #e0e0e0; padding-left: 6px; overflow: hidden; flex: none; }
.st-a { margin-left: 14px; width: 264.5px; }
.st-b { width: 1201px; }
.st-c { width: 265px; }
```
